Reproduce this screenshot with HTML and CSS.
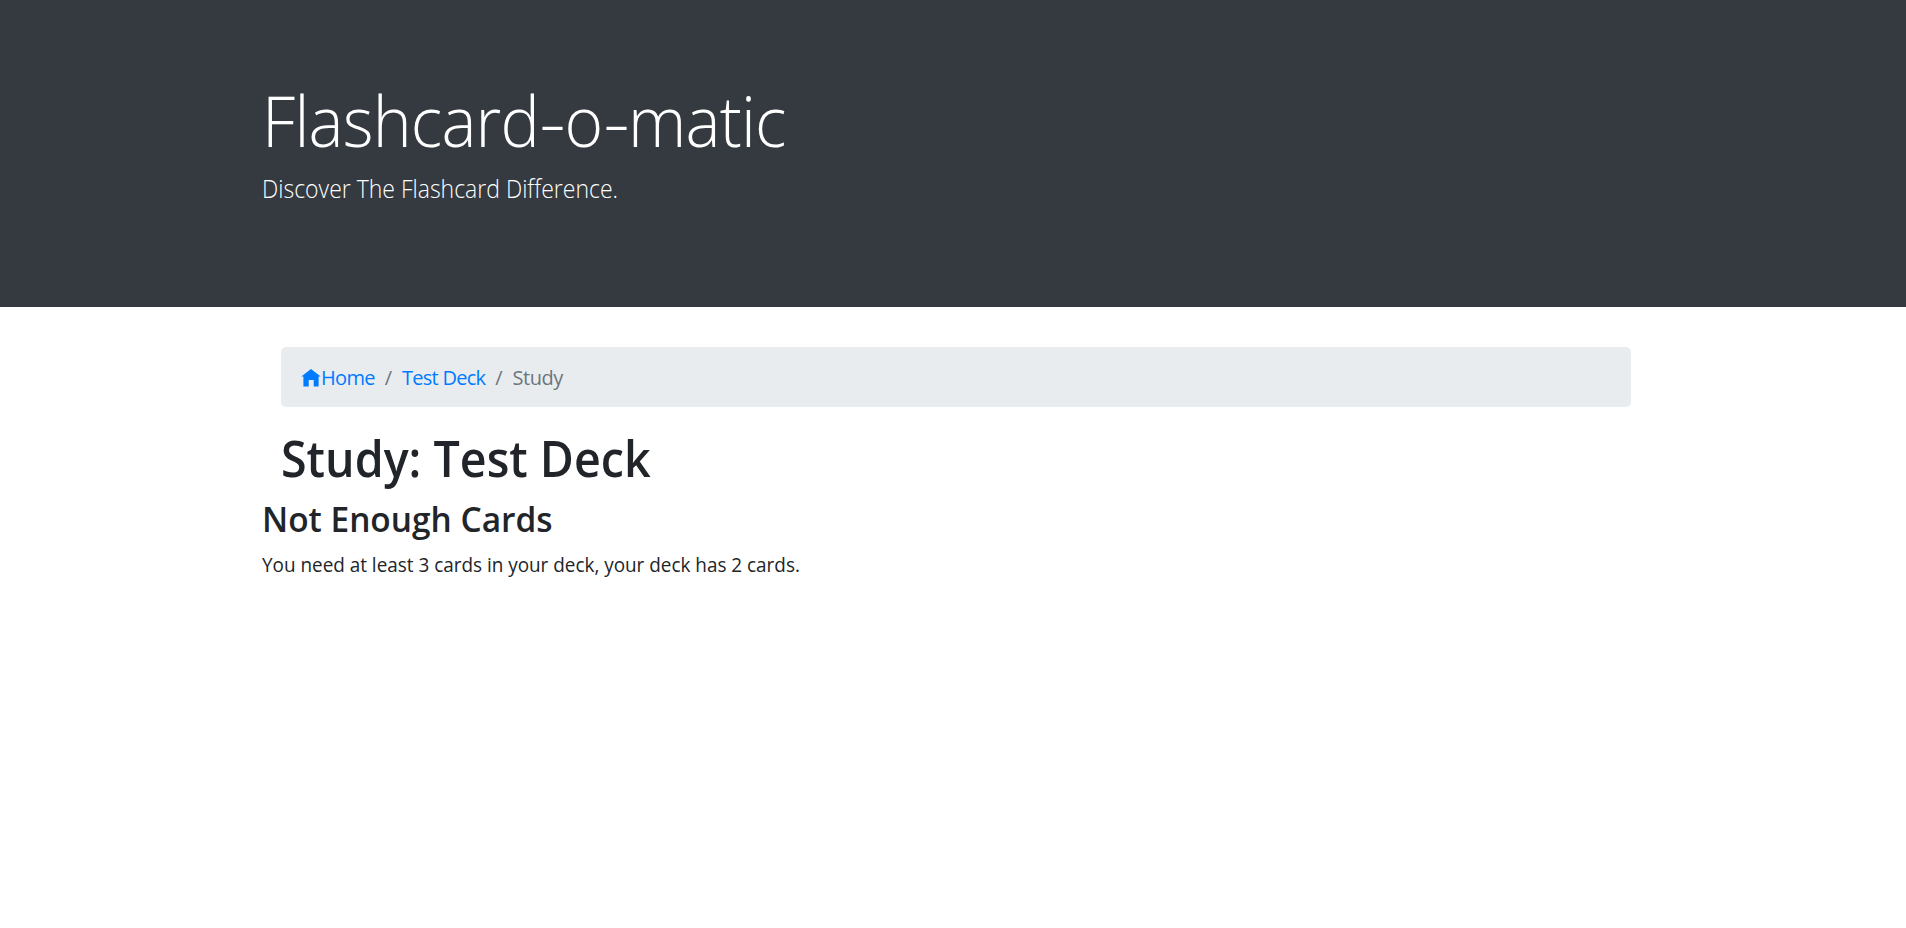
FILE: index.html
```html
<!DOCTYPE html>
<html lang="en">
<head>
<meta charset="utf-8">
<title>Flashcard-o-matic</title>
<link rel="stylesheet" href="styles.css">
</head>
<body>
<header class="jumbotron">
  <div class="container">
    <h1 class="display">Flashcard<span class="dash">-</span>o<span class="dash">-</span>matic</h1>
    <p class="lead">Discover The Flashcard Difference.</p>
  </div>
</header>
<main class="container">
  <div class="inset">
    <nav class="breadcrumb">
      <a class="home" href="#"><svg class="icon" viewBox="0 0 20 20" aria-hidden="true"><path d="M10 1 19.7 8.4H17.6V18.4H12.7V12H7.7V18.4H2.4V8.4H.3z"/></svg><span>Home</span></a>
      <span class="slash">/</span>
      <a class="deck" href="#">Test Deck</a>
      <span class="slash">/</span>
      <span class="current">Study</span>
    </nav>
    <h1 class="title">Study: Test Deck</h1>
  </div>
  <h3 class="subtitle">Not Enough Cards</h3>
  <p class="message">You need at least 3 cards in your deck, your deck has 2 cards.</p>
</main>
</body>
</html>
```
FILE: styles.css
```css
* { box-sizing: border-box; }
html { font-size: 20px; }
body {
  margin: 0;
  background: #fff;
  color: #212529;
  font: 400 1rem/1.5 "Open Sans", "Noto Sans", sans-serif;
}
h1, h3, p { margin: 0; white-space: nowrap; transform-origin: left center; }
.jumbotron {
  height: 307px;
  padding-top: 78px;
  margin-bottom: 40px;
  background: #343a40;
  color: #fff;
}
.container { width: 1425px; margin-left: 243.5px; padding: 0 18.75px; }
.inset { padding: 0 18.75px; }
.display { font-size: 70px; font-weight: 300; line-height: 84px; margin-bottom: 8px; letter-spacing: -.8px; transform: scaleX(.942); }
.dash { display: inline-block; margin: 0 2.2px 0 3.2px; transform: scaleX(1.25); }
.lead { font-size: 25px; font-weight: 330; line-height: 37.5px; transform: scaleX(.92); }
.breadcrumb {
  display: flex;
  height: 60px;
  padding: 16px 20px 14px;
  margin-bottom: 21px;
  border-radius: 5px;
  background: #e9ecef;
  color: #6c757d;
}
.breadcrumb a { color: #007bff; text-decoration: none; }
.home { display: flex; align-items: center; letter-spacing: -.7px; }
.deck { letter-spacing: -.75px; }
.current { letter-spacing: -.5px; }
.icon { width: 20px; height: 20px; fill: currentColor; }
.slash { padding: 0 10px; }
.title { font-size: 50px; font-weight: 550; line-height: 60px; margin-bottom: 10px; transform: scaleX(.932); }
.subtitle { font-size: 35px; font-weight: 550; line-height: 42px; margin-bottom: 10px; transform: scaleX(.955); }
.message { transform: scaleX(.945); }
```
